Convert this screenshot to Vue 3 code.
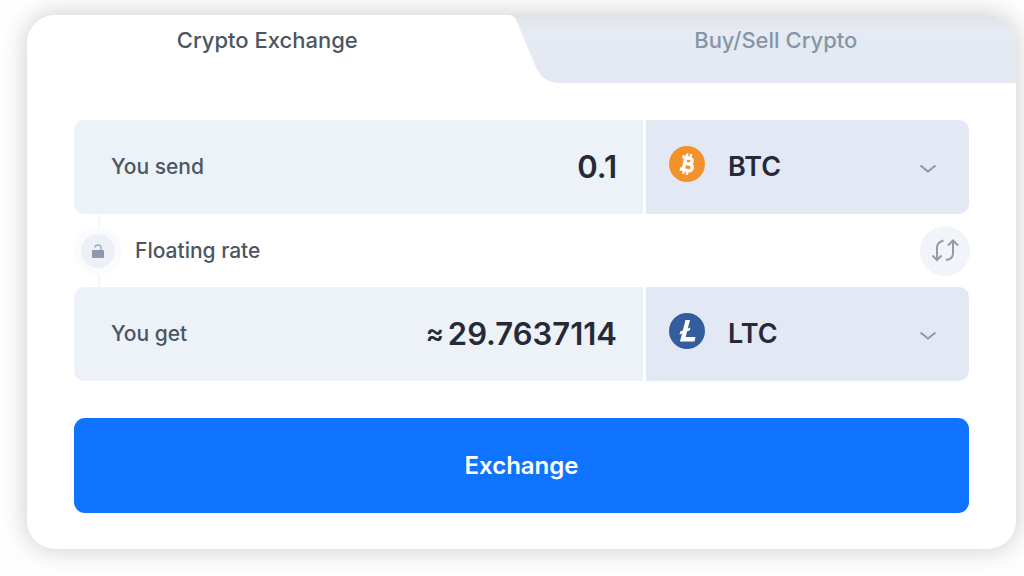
<script setup>
import { ref } from 'vue'

const amount = ref('0.1')
const received = ref('29.7637114')
const from = ref('BTC')
const to = ref('LTC')
const currencies = ['BTC', 'LTC']

function swap() {
  const previous = from.value
  from.value = to.value
  to.value = previous
}
</script>

<template>
  <main class="page">
    <form class="card" @submit.prevent>
      <div class="tabs">
        <button type="button" class="tab tab-active">Crypto Exchange</button>
        <svg class="edge" viewBox="0 0 52 68" preserveAspectRatio="none" aria-hidden="true">
          <path d="M0 0C5 0 7 2 9 7L27 50Q34 68 52 68H0Z" fill="#fff" />
        </svg>
        <button type="button" class="tab">Buy/Sell Crypto</button>
      </div>

      <div class="body">
        <div class="row">
          <div class="field">
            <label for="send">You send</label>
            <input id="send" v-model="amount" class="value" inputmode="decimal" />
          </div>
          <div class="currency">
            <svg class="coin" viewBox="0 0 36 36" aria-hidden="true">
              <circle cx="18" cy="18" r="18" fill="#f3922b" />
              <g transform="rotate(12 18 18)" fill="none" stroke="#fff">
                <path d="M12 11.8H19Q22.5 11.8 22.500 14.700T19 17.600H15.500M15.500 17.600H20Q24 17.600 24 21T20 24.300H12M15.500 11.800V24.300" stroke-width="3.2" />
                <path d="M16.300 7.500V12M20 7.500V12M16.300 24V28.500M20 24V28.500" stroke-width="2.2" />
              </g>
            </svg>
            <select v-model="from" aria-label="Currency you send">
              <option v-for="c in currencies" :key="c">{{ c }}</option>
            </select>
            <svg class="chevron" viewBox="0 0 18 10" aria-hidden="true">
              <path d="M1.500 1.500L9 7.500L16.500 1.500" />
            </svg>
          </div>
        </div>

        <div class="rate">
          <span class="lock">
            <svg viewBox="0 0 14 16" aria-hidden="true">
              <rect x="1" y="7" width="12" height="8" rx="1" fill="#8d99aa" />
              <path d="M4 4.500Q4 2 7 2T10 4.500V7" fill="none" stroke="#a3adba" stroke-width="1.500" />
            </svg>
          </span>
          <span class="rate-name">Floating rate</span>
          <button type="button" class="swap" aria-label="Swap currencies" @click="swap">
            <svg viewBox="0 0 28 24" aria-hidden="true">
              <path d="M12.500 1.500C8 2.500 6 5 6 9V21M1.500 16.500L6 21L10.500 16.500M15 21C20 20.500 22 18 22 14V2M17 6.500L22 1.500L27 6.500" />
            </svg>
          </button>
        </div>

        <div class="row">
          <div class="field">
            <label for="get">You get</label>
            <output id="get" class="value result"><span class="approx">≈</span>{{ received }}</output>
          </div>
          <div class="currency">
            <svg class="coin" viewBox="0 0 36 36" aria-hidden="true">
              <circle cx="18" cy="18" r="18" fill="#345d9d" />
              <path d="M16.500 7H21L18.800 15.600L21.500 14.500L20.800 17.300L18 18.500L16.700 24H26.500L25.500 28.500H11L13 20.500L10.500 21.500L11.200 18.600L13.800 17.500Z" fill="#fff" />
            </svg>
            <select v-model="to" aria-label="Currency you get">
              <option v-for="c in currencies" :key="c">{{ c }}</option>
            </select>
            <svg class="chevron" viewBox="0 0 18 10" aria-hidden="true">
              <path d="M1.500 1.500L9 7.500L16.500 1.500" />
            </svg>
          </div>
        </div>

        <button type="submit" class="submit">Exchange</button>
      </div>
    </form>
  </main>
</template>

<style>
body {
  background: #fefefe;
}
</style>

<style scoped>
.page {
  padding: 15px 8px 27px 27px;
  overflow: hidden;
  font-family: Inter, "Liberation Sans", sans-serif;
  font-size: 21px;
  font-weight: 500;
  color: #4b5662;
}

button,
input,
select {
  margin: 0;
  border: 0;
  padding: 0;
  background: none;
  color: inherit;
  font: inherit;
}

.card {
  border-radius: 28px;
  background: #fff;
  box-shadow: 0 0 24px 2px rgba(0, 0, 0, 0.18);
}

.tabs {
  display: flex;
  height: 68px;
  overflow: hidden;
  border-radius: 28px 28px 0 0;
  background: linear-gradient(#e0e4e9, #e5eaf3 16px, #e3e8f2);
}

.tab {
  flex: 1 1 0;
  padding-bottom: 18px;
  font-size: 22px;
  color: #8796a6;
}

.tab-active {
  background: #fff;
  color: #4b5662;
}

.edge {
  flex: none;
  width: 52px;
  height: 68px;
  margin-right: -24px;
}

.body {
  padding: 37px 47px 36px;
}

.row {
  display: grid;
  grid-template-columns: 569fr 323fr;
  gap: 3px;
  height: 94px;
}

.field {
  display: flex;
  align-items: center;
  min-width: 0;
  padding: 0 26px 2px 37px;
  border-radius: 10px 0 0 10px;
  background: #edf1f8;
}

.value {
  flex: 1;
  min-width: 0;
  text-align: right;
  font-size: 31px;
  font-weight: 600;
  color: #252a36;
}

.result {
  display: flex;
  align-items: center;
  justify-content: flex-end;
}

.approx {
  margin-right: 4px;
  font-size: 27px;
}

.currency {
  position: relative;
  display: flex;
  align-items: center;
  border-radius: 0 10px 10px 0;
  background: #e3e9f4;
}

.coin {
  position: absolute;
  left: 23px;
  top: 26px;
  width: 36px;
  height: 36px;
  pointer-events: none;
}

.currency select {
  width: 100%;
  height: 100%;
  padding: 0 0 2px 82px;
  border-radius: inherit;
  appearance: none;
  font-size: 27px;
  font-weight: 600;
  color: #252a36;
}

.chevron {
  position: absolute;
  right: 32px;
  top: 44px;
  width: 18px;
  height: 10px;
  fill: none;
  stroke: #8e97a5;
  stroke-width: 2;
  pointer-events: none;
}

.rate {
  display: flex;
  align-items: center;
  height: 73px;
  background: linear-gradient(#f3f6fa, #f3f6fa) 24px 0 / 2px 100% no-repeat;
}

.lock {
  display: flex;
  align-items: center;
  justify-content: center;
  box-sizing: border-box;
  width: 48px;
  height: 48px;
  border: 7px solid #f9fbfd;
  border-radius: 50%;
  background: #edf1f7;
}

.lock svg {
  width: 14px;
  height: 16px;
}

.rate-name {
  margin-left: 13px;
}

.swap {
  display: flex;
  align-items: center;
  justify-content: center;
  width: 50px;
  height: 50px;
  margin-left: auto;
  margin-right: -1px;
  border-radius: 50%;
  background: #f1f4f9;
}

.swap svg {
  width: 28px;
  height: 24px;
  fill: none;
  stroke: #939ba6;
  stroke-width: 2;
}

.submit {
  width: 100%;
  height: 95px;
  margin-top: 37px;
  border-radius: 11px;
  background: #0f73ff;
  font-size: 24px;
  font-weight: 600;
  color: #fff;
}
</style>
